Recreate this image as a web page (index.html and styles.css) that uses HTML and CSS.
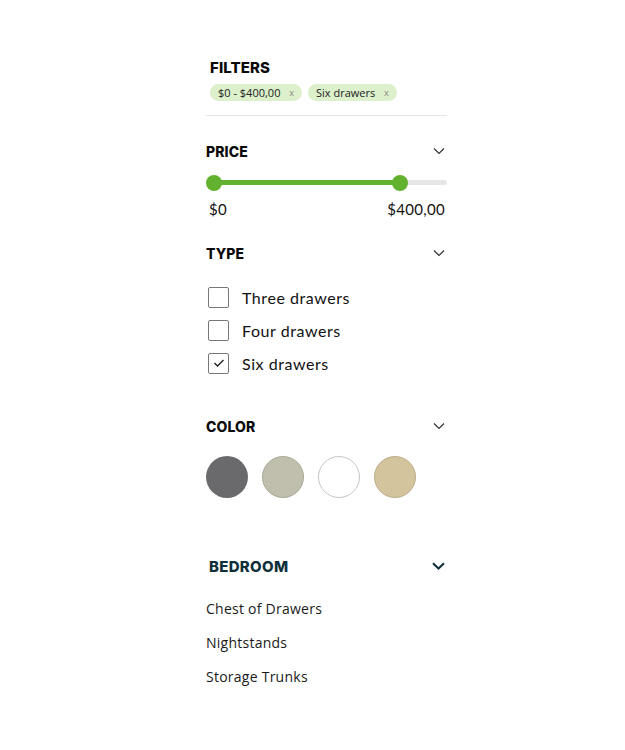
FILE: index.html
```html
<!DOCTYPE html>
<html>
<head>
<meta charset="utf-8">
<link rel="stylesheet" href="styles.css">
</head>
<body>
<aside class="filters">
  <header class="filters-head">
    <h2 class="filters-title">FILTERS</h2>
    <div class="chips">
      <span class="chip">$0 - $400,00 <span class="chip-x">x</span></span>
      <span class="chip">Six drawers <span class="chip-x">x</span></span>
    </div>
  </header>

  <section class="group group-price">
    <div class="group-head">
      <h3 class="group-title">PRICE</h3>
      <svg class="chev" width="12" height="8" viewBox="0 0 12 8"><path d="M1 1.5 L6 6.5 L11 1.5" fill="none" stroke="#333" stroke-width="1.2"/></svg>
    </div>
    <div class="slider">
      <div class="track"><div class="fill"></div></div>
      <span class="knob knob-a"></span>
      <span class="knob knob-b"></span>
    </div>
    <div class="range-labels"><span>$0</span><span>$400,00</span></div>
  </section>

  <section class="group group-type">
    <div class="group-head">
      <h3 class="group-title">TYPE</h3>
      <svg class="chev" width="12" height="8" viewBox="0 0 12 8"><path d="M1 1.5 L6 6.5 L11 1.5" fill="none" stroke="#333" stroke-width="1.2"/></svg>
    </div>
    <ul class="checks">
      <li class="check"><span class="box"></span>Three drawers</li>
      <li class="check"><span class="box"></span>Four drawers</li>
      <li class="check"><span class="box"><svg width="12" height="10" viewBox="0 0 12 10"><path d="M1.5 5 L4.5 8 L10.5 2" fill="none" stroke="#222" stroke-width="1.4"/></svg></span>Six drawers</li>
    </ul>
  </section>

  <section class="group group-color">
    <div class="group-head">
      <h3 class="group-title">COLOR</h3>
      <svg class="chev" width="12" height="8" viewBox="0 0 12 8"><path d="M1 1.5 L6 6.5 L11 1.5" fill="none" stroke="#333" stroke-width="1.2"/></svg>
    </div>
    <div class="swatches">
      <span class="swatch sw-grey"></span>
      <span class="swatch sw-sage"></span>
      <span class="swatch sw-white"></span>
      <span class="swatch sw-sand"></span>
    </div>
  </section>

  <section class="group group-bedroom">
    <div class="group-head bedroom-head">
      <h3 class="bedroom-title">BEDROOM</h3>
      <svg class="chev" width="13" height="8" viewBox="0 0 13 8"><path d="M1 1.3 L6.5 6.5 L12 1.3" fill="none" stroke="#0f2f3a" stroke-width="2"/></svg>
    </div>
    <ul class="links">
      <li>Chest of Drawers</li>
      <li>Nightstands</li>
      <li>Storage Trunks</li>
    </ul>
  </section>
</aside>
</body>
</html>
```

FILE: styles.css
```css
* { box-sizing: border-box; }
html, body { margin: 0; padding: 0; background: #fff; }
body { font-family: "Open Sans", "Noto Sans", sans-serif; color: #111; }
h2, h3, ul { margin: 0; padding: 0; list-style: none; }

.filters {
  width: 241px;
  margin: 0 0 0 206px;
  padding-top: 58px;
}

.filters-head {
  padding: 0 0 14px 4px;
  border-bottom: 1px solid #e6e6e6;
}
.filters-title {
  font-family: "Inter", sans-serif;
  font-weight: 800;
  font-size: 15px;
  line-height: 20px;
  letter-spacing: 0.1px;
  color: #0a0a0a;
}
.chips { display: flex; gap: 6px; margin-top: 6px; }
.chip {
  display: inline-flex;
  align-items: center;
  height: 17px;
  padding: 0 8px 0 8px;
  border-radius: 9px;
  background: #ddf0cc;
  font-size: 11px;
  color: #222;
  white-space: pre;
}
.chip-x { color: #888; font-size: 9px; margin-left: 6px; }

.group-head {
  display: flex;
  justify-content: space-between;
  align-items: center;
  height: 20px;
}
.group-title {
  font-family: "Inter", sans-serif;
  font-weight: 800;
  font-size: 14px;
  letter-spacing: 0.1px;
  color: #0a0a0a;
}
.chev { margin-right: 2px; }

.group-price { padding-top: 25px; }
.slider { position: relative; height: 16px; margin-top: 14px; }
.track {
  position: absolute; left: 8px; right: 0; top: 5px; height: 5px;
  background: #e6e6e6; border-radius: 3px;
}
.fill { width: 186px; height: 100%; background: #62b22f; border-radius: 3px; }
.knob {
  position: absolute; top: 0; width: 16px; height: 16px;
  border-radius: 50%; background: #62b22f;
}
.knob-a { left: 0; }
.knob-b { left: 186px; }
.range-labels {
  display: flex; justify-content: space-between;
  margin-top: 8px; padding: 0 2px 0 3px;
  font-family: "Lato", sans-serif; font-size: 15px; line-height: 20px;
  letter-spacing: 0.3px; color: #111;
}

.group-type { padding-top: 24px; }
.checks { margin-top: 24px; display: flex; flex-direction: column; gap: 13px; }
.check {
  display: flex; align-items: center; height: 20px;
  font-family: "Lato", sans-serif; font-size: 16px; letter-spacing: 0.55px; color: #111;
  padding-left: 2px;
}
.box {
  width: 21px; height: 21px; border: 1px solid #777; border-radius: 2px;
  margin-right: 13px; display: flex; align-items: center; justify-content: center;
}

.group-color { padding-top: 43px; }
.swatches { display: flex; gap: 14px; margin-top: 20px; }
.swatch { width: 42px; height: 42px; border-radius: 50%; }
.sw-grey { background: #6a6a6c; }
.sw-sage { background: #c0bfad; border: 1px solid #a9a898; }
.sw-white { background: #fff; border: 1px solid #c6c6c6; }
.sw-sand { background: #d4c49d; border: 1px solid #bcae8b; }

.group-bedroom { padding-top: 58px; }
.bedroom-head { padding-left: 3px; }
.bedroom-title {
  font-family: "Inter", sans-serif; font-weight: 800; font-size: 15px;
  letter-spacing: 0.3px; color: #0f2f3a;
}
.links { margin-top: 23px; display: flex; flex-direction: column; gap: 14px; }
.links li { font-size: 14px; line-height: 20px; color: #1a1a1a; letter-spacing: 0.25px; }
```
